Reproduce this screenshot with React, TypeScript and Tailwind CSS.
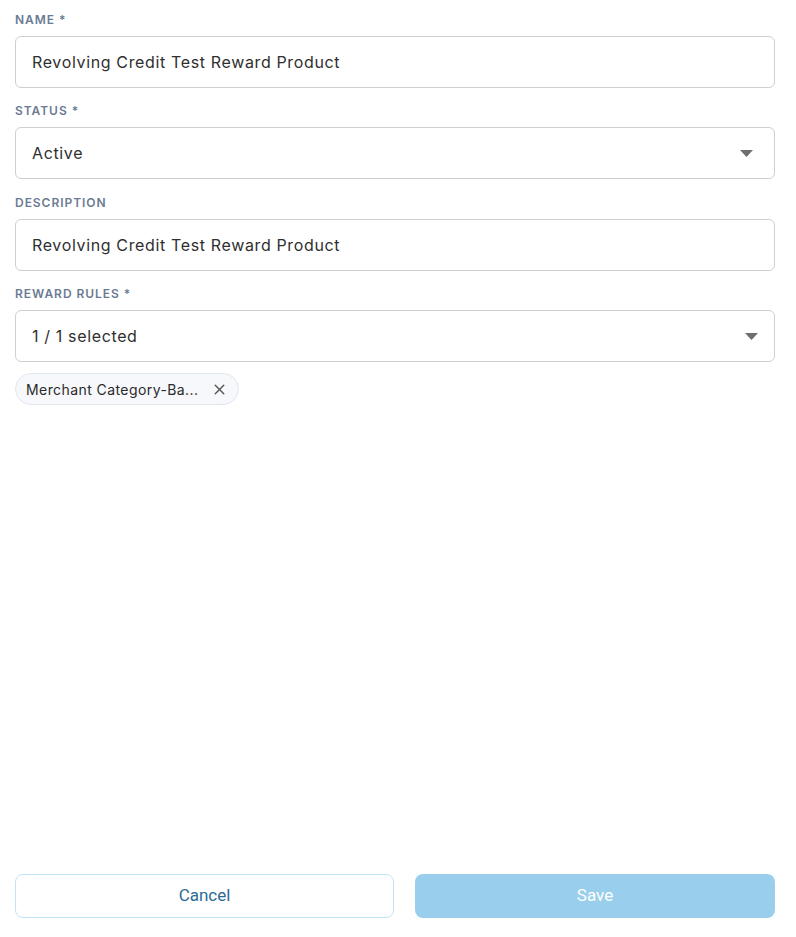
import { X } from "lucide-react"

function FieldLabel({ children }: { children: React.ReactNode }) {
  return (
    <div className="mb-2 text-[12px] leading-4 font-semibold tracking-[0.08em] text-[#6b7b93] uppercase">
      {children}
    </div>
  )
}

function Caret() {
  return (
    <svg width="13" height="7" viewBox="0 0 13 7">
      <path d="M0 0h13L6.5 7z" fill="#6e6e6e" />
    </svg>
  )
}

export default function App() {
  return (
    <div className="flex min-h-screen flex-col bg-white pt-3 pr-[21px] pb-[19px] pl-[15px] font-['Inter',sans-serif] text-[#2f2f2f]">
      <div className="flex flex-col">
        <div>
          <FieldLabel>Name *</FieldLabel>
          <div className="flex h-[52px] items-center rounded-md border border-[#cfcfcf] px-4 text-[16px] tracking-[0.04em]">
            Revolving Credit Test Reward Product
          </div>
        </div>

        <div className="mt-[15px]">
          <FieldLabel>Status *</FieldLabel>
          <div className="flex h-[52px] items-center justify-between rounded-md border border-[#cfcfcf] pr-[21px] pl-4 text-[16px] tracking-[0.04em]">
            <span>Active</span>
            <Caret />
          </div>
        </div>

        <div className="mt-[16px]">
          <FieldLabel>Description</FieldLabel>
          <div className="flex h-[52px] items-center rounded-md border border-[#cfcfcf] px-4 text-[16px] tracking-[0.04em]">
            Revolving Credit Test Reward Product
          </div>
        </div>

        <div className="mt-[15px]">
          <FieldLabel>Reward Rules *</FieldLabel>
          <div className="flex h-[52px] items-center justify-between rounded-md border border-[#cfcfcf] pr-[16px] pl-4 text-[16px] tracking-[0.04em]">
            <span>1 / 1 selected</span>
            <Caret />
          </div>
          <div className="mt-[11px] flex">
            <div className="flex h-[32px] items-center gap-[13px] rounded-full border border-[#e3e7ee] bg-[#f6f8fb] pr-[10px] pl-[10px] text-[14px] tracking-[0.03em] text-[#2a2a2a]">
              <span>Merchant Category-Ba...</span>
              <X size={17} strokeWidth={2} className="text-[#555]" />
            </div>
          </div>
        </div>
      </div>

      <div className="mt-auto grid grid-cols-[379px_1fr] gap-[21px]">
        <button className="h-[44px] rounded-lg border border-[#bfe4f8] bg-white font-['Roboto',sans-serif] text-[17px] font-normal text-[#2c6b95]">
          Cancel
        </button>
        <button className="h-[44px] rounded-lg bg-[#99cfec] font-['Roboto',sans-serif] text-[17px] font-normal text-white">
          Save
        </button>
      </div>
    </div>
  )
}
